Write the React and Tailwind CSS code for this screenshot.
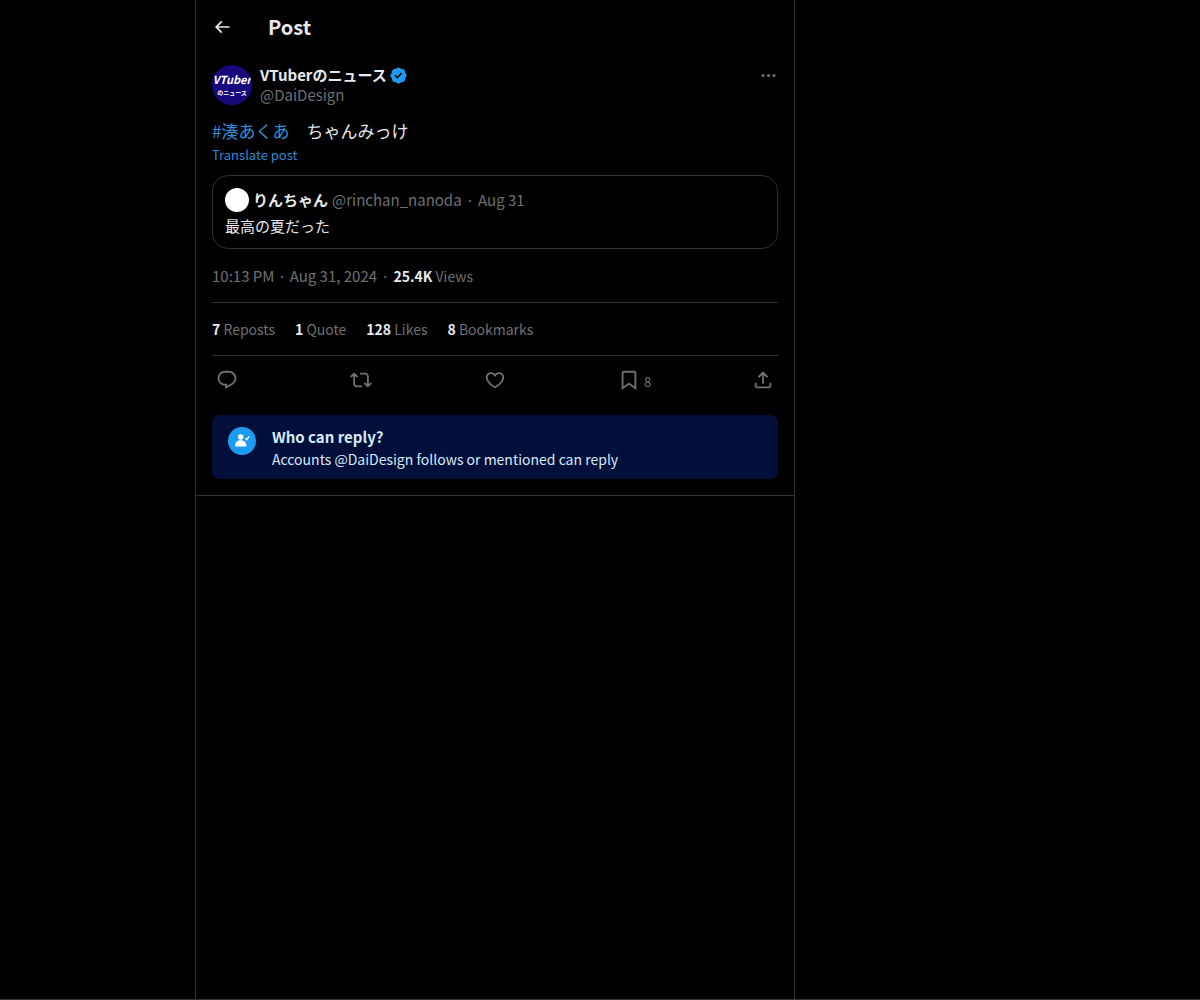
import React from "react";

const ICONS = {
  back: "M7.414 13l5.043 5.04-1.414 1.42L3.586 12l7.457-7.46 1.414 1.42L7.414 11H21v2H7.414z",
  more: "M3 12c0-1.1.9-2 2-2s2 .9 2 2-.9 2-2 2-2-.9-2-2zm9 2c1.1 0 2-.9 2-2s-.9-2-2-2-2 .9-2 2 .9 2 2 2zm7 0c1.1 0 2-.9 2-2s-.9-2-2-2-2 .9-2 2 .9 2 2 2z",
  reply: "M1.751 10c0-4.42 3.584-8 8.005-8h4.366c4.49 0 8.129 3.64 8.129 8.13 0 2.96-1.607 5.68-4.196 7.11l-8.054 4.46v-3.69h-.067c-4.49.1-8.183-3.51-8.183-8.01zm8.005-6c-3.317 0-6.005 2.69-6.005 6 0 3.37 2.77 6.08 6.138 6.01l.351-.01h1.761v2.3l5.087-2.81c1.951-1.08 3.163-3.13 3.163-5.36 0-3.39-2.744-6.13-6.129-6.13H9.756z",
  repost: "M4.5 3.88l4.432 4.14-1.364 1.46L5.5 7.55V16c0 1.1.896 2 2 2H13v2H7.5c-2.209 0-4-1.79-4-4V7.55L1.432 9.48.068 8.02 4.5 3.88zM16.5 6H11V4h5.5c2.209 0 4 1.79 4 4v8.45l2.068-1.93 1.364 1.46-4.432 4.14-4.432-4.14 1.364-1.46 2.068 1.93V8c0-1.1-.896-2-2-2z",
  like: "M16.697 5.5c-1.222-.06-2.679.51-3.89 2.16l-.805 1.09-.806-1.09C9.984 6.01 8.526 5.44 7.304 5.5c-1.243.07-2.349.78-2.91 1.91-.552 1.12-.633 2.78.479 4.82 1.074 1.97 3.257 4.27 7.129 6.61 3.87-2.34 6.052-4.64 7.126-6.61 1.111-2.04 1.03-3.7.477-4.82-.561-1.13-1.666-1.84-2.908-1.91zm4.187 7.69c-1.351 2.48-4.001 5.12-8.379 7.67l-.503.3-.504-.3c-4.379-2.55-7.029-5.19-8.382-7.67-1.36-2.5-1.41-4.86-.514-6.67.887-1.79 2.647-2.91 4.601-3.01 1.651-.09 3.368.56 4.798 2.01 1.429-1.45 3.146-2.1 4.796-2.01 1.954.1 3.714 1.22 4.601 3.01.896 1.81.846 4.17-.514 6.67z",
  bookmark: "M4 4.5C4 3.12 5.119 2 6.5 2h11C18.881 2 20 3.12 20 4.5v18.44l-8-5.71-8 5.71V4.5zM6.5 4c-.276 0-.5.22-.5.5v14.56l6-4.29 6 4.29V4.5c0-.28-.224-.5-.5-.5h-11z",
  share: "M12 2.59l5.7 5.7-1.41 1.42L13 6.41V16h-2V6.41l-3.3 3.3-1.41-1.42L12 2.59zM21 15l-.02 3.51c0 1.38-1.12 2.49-2.5 2.49H5.5C4.11 21 3 19.88 3 18.5V15h2v3.5c0 .28.22.5.5.5h12.98c.28 0 .5-.22.5-.5L19 15h2z",
};

const STATS = [
  { value: "7", label: "Reposts" },
  { value: "1", label: "Quote" },
  { value: "128", label: "Likes" },
  { value: "8", label: "Bookmarks" },
];

const ACTIONS = [
  { icon: "reply", label: "Reply" },
  { icon: "repost", label: "Repost" },
  { icon: "like", label: "Like" },
  { icon: "bookmark", label: "Bookmark", count: 8 },
];

const Icon = ({ name, className }) => (
  <svg viewBox="0 0 24 24" fill="currentColor" aria-hidden="true" className={className}>
    <path d={ICONS[name]} />
  </svg>
);

const VerifiedBadge = () => (
  <svg viewBox="0 0 22 22" fill="currentColor" role="img" aria-label="Verified account" className="size-[19px] text-[#1d9bf0]">
    <path d="M20.396 11c-.018-.646-.215-1.275-.57-1.816-.354-.54-.852-.972-1.438-1.246.223-.607.27-1.264.14-1.897-.131-.634-.437-1.218-.882-1.687-.47-.445-1.053-.75-1.687-.882-.633-.13-1.29-.083-1.897.14-.273-.587-.704-1.086-1.245-1.44S11.647 1.62 11 1.604c-.646.017-1.273.213-1.813.568s-.969.854-1.24 1.44c-.608-.223-1.267-.272-1.902-.14-.635.13-1.22.436-1.69.882-.445.47-.749 1.055-.878 1.688-.13.633-.08 1.29.144 1.896-.587.274-1.087.705-1.443 1.245-.356.54-.555 1.17-.574 1.817.02.647.218 1.276.574 1.817.356.54.856.972 1.443 1.245-.224.606-.274 1.263-.144 1.896.13.634.433 1.218.877 1.688.47.443 1.054.747 1.687.878.633.132 1.29.084 1.897-.136.274.586.705 1.084 1.246 1.439.54.354 1.17.551 1.816.569.647-.016 1.276-.213 1.817-.567s.972-.854 1.245-1.44c.604.239 1.266.296 1.903.164.636-.132 1.22-.447 1.68-.907.46-.46.776-1.044.908-1.681s.075-1.299-.165-1.903c.586-.274 1.084-.705 1.439-1.246.354-.54.551-1.17.569-1.816zM9.662 14.85l-3.429-3.428 1.293-1.302 2.072 2.072 4.4-4.794 1.347 1.246z" />
  </svg>
);

const ChannelAvatar = () => (
  <div className="flex size-10 shrink-0 flex-col items-center justify-center overflow-hidden rounded-full bg-[#17087c] font-bold text-white">
    <span className="text-[11px] leading-4 italic">VTuber</span>
    <span className="text-[6px] leading-3">のニュース</span>
  </div>
);

const QuotedPost = () => (
  <div className="mt-3 rounded-2xl border border-[#2f3133] p-3 text-[15px] leading-5">
    <div className="flex items-center gap-1">
      <div className="size-6 rounded-full bg-white" />
      <span className="font-bold">りんちゃん</span>
      <span className="text-[#6e7072]">@rinchan_nanoda</span>
      <span className="text-[#6e7072]">·</span>
      <span className="text-[#6e7072]">Aug 31</span>
    </div>
    <p className="mt-1">最高の夏だった</p>
  </div>
);

const ReplyNotice = () => (
  <div className="mt-3 flex gap-4 rounded-lg bg-[#020f3b] px-4 pt-3 pb-2.5 text-[#d6eaf8]">
    <div className="flex size-7 shrink-0 items-center justify-center rounded-full bg-[#1d9bf0]">
      <svg viewBox="0 0 16 16" className="size-4" aria-hidden="true">
        <circle cx="6.7" cy="4" r="2.7" fill="#fff" />
        <path d="M1 13.500c0-3.800 2-6.200 5.700-6.200s5.700 2.400 5.700 6.200z" fill="#fff" />
        <path d="M11.400 5.300l1.300 1.400 2.500-3.400" fill="none" stroke="#fff" strokeWidth="1.3" />
      </svg>
    </div>
    <div>
      <h2 className="text-[15px] leading-5 font-bold">Who can reply?</h2>
      <p className="mt-0.5 text-sm">Accounts @DaiDesign follows or mentioned can reply</p>
    </div>
  </div>
);

const App = () => {
  return (
    <div
      lang="ja"
      className="flex min-h-screen flex-col border-b border-[#2f3133] bg-black font-['Noto_Sans_CJK_JP',sans-serif] text-[#e7e9ea]"
    >
      <main className="ml-[195px] w-full max-w-[600px] grow border-x border-[#2f3133]">
        <header className="flex h-[53px] items-center gap-9 px-4">
          <button type="button" aria-label="Back" className="flex size-5 items-center justify-center">
            <Icon name="back" className="size-5" />
          </button>
          <h1 className="text-xl font-bold">Post</h1>
        </header>

        <article className="border-b border-[#2f3133] px-4 pt-3 pb-4">
          <div className="flex gap-2">
            <ChannelAvatar />
            <div className="grow text-[15px] leading-5">
              <div className="flex items-center gap-0.5">
                <span className="font-bold">VTuberのニュース</span>
                <VerifiedBadge />
              </div>
              <a href="#profile" className="block text-[#6e7072]">@DaiDesign</a>
            </div>
            <button type="button" aria-label="More" className="flex h-5 items-center text-[#6e7072]">
              <Icon name="more" className="size-[19px]" />
            </button>
          </div>

          <p className="mt-3.5 text-[17px] leading-6">
            <a href="#hashtag" className="text-[#2b93de]">#湊あくあ</a>
            {"　ちゃんみっけ"}
          </p>
          <button type="button" className="mt-1 block text-[13px] leading-4 text-[#2b8bd2]">
            Translate post
          </button>

          <QuotedPost />

          <div className="flex gap-1 border-b border-[#2f3133] pt-[17px] pb-4 text-[15px] leading-5 text-[#6e7072]">
            <a href="#post">10:13 PM · Aug 31, 2024</a>
            <span>·</span>
            <span className="text-sm leading-5">
              <b className="text-[#e7e9ea]">25.4K</b> Views
            </span>
          </div>

          <div className="flex gap-5 border-b border-[#2f3133] py-4 text-sm text-[#6e7072]">
            {STATS.map((s) => (
              <a key={s.label} href="#stats">
                <b className="text-[#e7e9ea]">{s.value}</b> {s.label}
              </a>
            ))}
          </div>

          <div className="flex h-[47px] items-center text-[#6e7072]">
            {ACTIONS.map((a) => (
              <div key={a.icon} className="flex-1">
                <button type="button" aria-label={a.label} className="flex items-end gap-1 pl-1">
                  <Icon name={a.icon} className="size-[22px]" />
                  {a.count && <span className="text-[13px] leading-[18px]">{a.count}</span>}
                </button>
              </div>
            ))}
            <button type="button" aria-label="Share" className="flex w-[30px] pl-1">
              <Icon name="share" className="size-[22px]" />
            </button>
          </div>

          <ReplyNotice />
        </article>
      </main>
    </div>
  );
};

export default App;
